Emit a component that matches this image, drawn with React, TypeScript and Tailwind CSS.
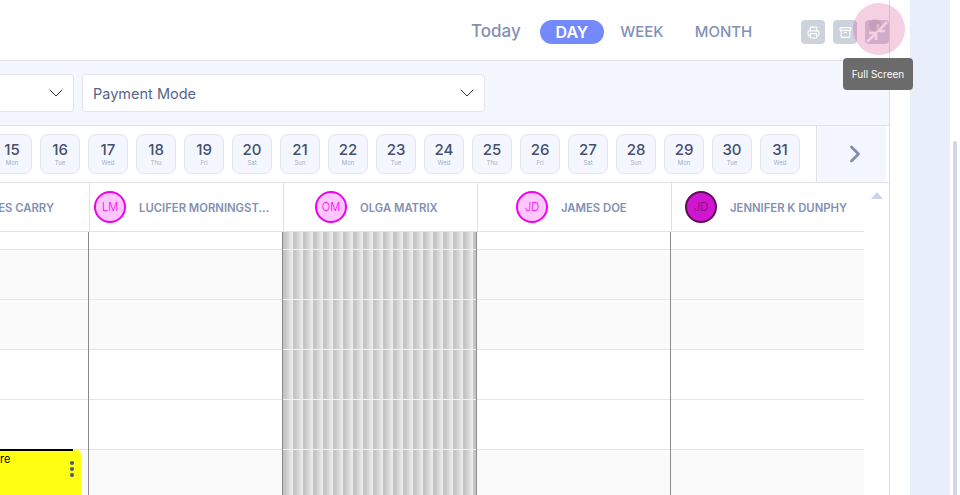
import React from "react";
import { ChevronDown, ChevronRight, Printer, Archive } from "lucide-react";

const days = [
  ["15", "Mon"], ["16", "Tue"], ["17", "Wed"], ["18", "Thu"], ["19", "Fri"], ["20", "Sat"],
  ["21", "Sun"], ["22", "Mon"], ["23", "Tue"], ["24", "Wed"], ["25", "Thu"], ["26", "Fri"],
  ["27", "Sat"], ["28", "Sun"], ["29", "Mon"], ["30", "Tue"], ["31", "Wed"],
];

const doctors = [
  { initials: "LM", name: "LUCIFER MORNINGST...", dark: false, pad: "pl-[4px]" },
  { initials: "OM", name: "OLGA MATRIX", dark: false, pad: "pl-[31px]" },
  { initials: "JD", name: "JAMES DOE", dark: false, pad: "pl-[38px]" },
  { initials: "JD", name: "JENNIFER K DUNPHY", dark: true, pad: "pl-[13px]" },
];

const rows = ["h-[18px]", "h-[50px] bg-[#fafafa]", "h-[50px] bg-[#fafafa]", "h-[50px] bg-white", "h-[50px] bg-white", "h-[50px] bg-[#fafafa]"];

export default function App() {
  return (
    <div className="flex h-[495px] w-[960px] overflow-hidden bg-white font-['Inter',sans-serif]">
      {/* main card */}
      <div className="relative z-10 h-full w-[910px] shrink-0 rounded-tr-[10px] bg-white">
        <div className="h-full w-[890px] border-r border-[#dedede]">
          {/* toolbar */}
          <div className="flex h-[61px] items-center border-b border-[#e2e2e2] pl-[471px] pt-1 text-[#8291b4]">
            <span className="w-[69px] text-[17px] font-medium">Today</span>
            <span className="flex h-6 w-[65px] items-center justify-center rounded-full bg-[#7489fb] text-[16px] font-semibold text-white">DAY</span>
            <span className="ml-[16px] w-[75px] text-[15px] font-medium">WEEK</span>
            <span className="w-[107px] text-[15px] font-medium">MONTH</span>
            <div className="flex gap-2">
              <span className="flex h-6 w-6 items-center justify-center rounded bg-[#cdd2dd] text-white"><Printer size={13} /></span>
              <span className="flex h-6 w-6 items-center justify-center rounded bg-[#cdd2dd] text-white"><Archive size={13} /></span>
              <span className="flex h-6 w-6 items-center justify-center rounded bg-[#cdd2dd]">
                <svg width="24" height="24" viewBox="0 0 24 24" fill="none" stroke="#ffffff" strokeWidth="2.6">
                  <path d="M22 2 13.500 10.500M13 4v7h7M2 22l8.500-8.500M11 20v-7H4" />
                </svg>
              </span>
            </div>
          </div>

          {/* filters */}
          <div className="flex h-[65px] items-center gap-2 border-b border-[#e2e2e2] bg-[#f4f7ff]">
            <div className="flex h-[38px] w-[74px] items-center justify-end rounded-r border border-l-0 border-[#e2e5ee] bg-white pr-[5px]">
              <ChevronDown size={24} strokeWidth={1} className="text-[#333]" />
            </div>
            <div className="flex h-[38px] w-[403px] items-center justify-between rounded border border-[#e2e5ee] bg-white pl-[10px] pr-[5px] text-[14.5px] text-[#56658a]">
              <span className="pt-px">Payment Mode</span>
              <ChevronDown size={24} strokeWidth={1} className="text-[#333]" />
            </div>
          </div>

          {/* date strip */}
          <div className="flex h-[57px] border-b border-[#e2e2e2]">
            <div className="w-[816px] overflow-hidden">
              <div className="ml-[-8px] flex h-full items-center gap-2">
                {days.map(([num, day]) => (
                  <div key={num} className="flex h-10 w-10 shrink-0 flex-col items-center justify-center rounded-lg border border-[#e2e5ee] bg-[#f4f7ff]">
                    <span className="text-[15px] font-medium leading-[17px] text-[#43506f]">{num}</span>
                    <span className="text-[6px] leading-[9px] text-[#a5adbf]">{day}</span>
                  </div>
                ))}
              </div>
            </div>
            <div className="flex w-[70px] items-center justify-center border-l border-[#e2e2e2] bg-[#f4f7ff] pl-[6px]">
              <ChevronRight size={28} strokeWidth={2.4} className="text-[#7e8db0]" />
            </div>
          </div>

          {/* doctors header */}
          <div className="flex h-[49px] w-[864px] border-b border-[#e2e2e2]">
            <div className="flex w-[90px] shrink-0 items-center justify-end border-r border-[#e2e2e2] pr-[35px]">
              <span className="mt-[2px] whitespace-nowrap text-[11.3px] font-semibold text-[#8291b4]">ES CARRY</span>
            </div>
            {doctors.map((doc, i) => (
              <div key={i} className={`flex w-[194px] shrink-0 items-center border-r border-[#e2e2e2] last:border-r-0 ${doc.pad}`}>
                <span className={doc.dark
                  ? "flex h-8 w-8 shrink-0 items-center justify-center rounded-full border-2 border-[#5d0c56] bg-[#d016d0] text-[11px] font-light text-[#7d0c75]"
                  : "flex h-8 w-8 shrink-0 items-center justify-center rounded-full border-2 border-[#ee00ee] bg-[#ffc6ff] text-[11px] font-light text-[#ee00ee]"}>
                  {doc.initials}
                </span>
                <span className="ml-[13px] mt-[2px] whitespace-nowrap text-[11.3px] font-semibold text-[#8291b4]">{doc.name}</span>
              </div>
            ))}
          </div>

          {/* schedule body */}
          <div className="flex w-[864px]">
            {[89, 194, 194, 194, 193].map((w, c) => (
              <div key={c} style={{ width: w }} className={c < 4 ? "relative shrink-0 border-r border-[#8a8a8a]" : "relative shrink-0"}>
                {c === 2 ? (
                  <div className="h-full bg-[repeating-linear-gradient(90deg,#c4c4c4_0px,#c4c4c4_2px,#f0f0f0_10px)]">
                    {rows.map((_, i) => (
                      <div key={i} className={`${i === 0 ? "h-[18px]" : "h-[50px]"} border-b border-[#f2f2f2]`} />
                    ))}
                  </div>
                ) : (
                  rows.map((r, i) => <div key={i} className={`${r} border-b border-[#e6e6e6]`} />)
                )}
                {c === 0 && (
                  <div className="absolute left-0 top-[217px] h-[60px] w-[81px] rounded-tr-md bg-[#ffff12]">
                    <div className="h-[2px] w-[73px] bg-black" />
                    <div className="flex justify-between pr-[7px]">
                      <span className="pt-px text-[11px] leading-[14px] text-black">re</span>
                      <span className="mt-[10px] flex flex-col gap-[2px]">
                        <span className="h-1 w-1 rounded-full bg-[#4a5a7e]" />
                        <span className="h-1 w-1 rounded-full bg-[#4a5a7e]" />
                        <span className="h-1 w-1 rounded-full bg-[#4a5a7e]" />
                      </span>
                    </div>
                  </div>
                )}
              </div>
            ))}
          </div>
        </div>

        {/* scroll arrow */}
        <div className="absolute left-[871px] top-[192px] h-0 w-0 border-x-[6px] border-b-[7px] border-x-transparent border-b-[#cdd4e8]" />

        {/* hover ripple + tooltip */}
        <div className="absolute left-[853px] top-[3px] h-[52px] w-[52px] rounded-full bg-[#d6408a]/25" />
        <div className="absolute left-[869px] top-[19px] h-3 w-3 rounded-full bg-[#a8829c]/30" />
        <div className="absolute left-[843px] top-[58px] flex h-8 w-[70px] items-center justify-center rounded bg-[#6b6b6b] text-[10px] text-white">Full Screen</div>
      </div>

      {/* page background + scrollbar */}
      <div className="h-full w-10 shrink-0 bg-[#e9effa]" />
      <div className="flex h-full w-[10px] shrink-0 flex-col bg-white pl-[3px] pt-[141px]">
        <div className="h-full w-1 rounded-t-sm bg-[#cfd6ea]" />
      </div>
    </div>
  );
}
